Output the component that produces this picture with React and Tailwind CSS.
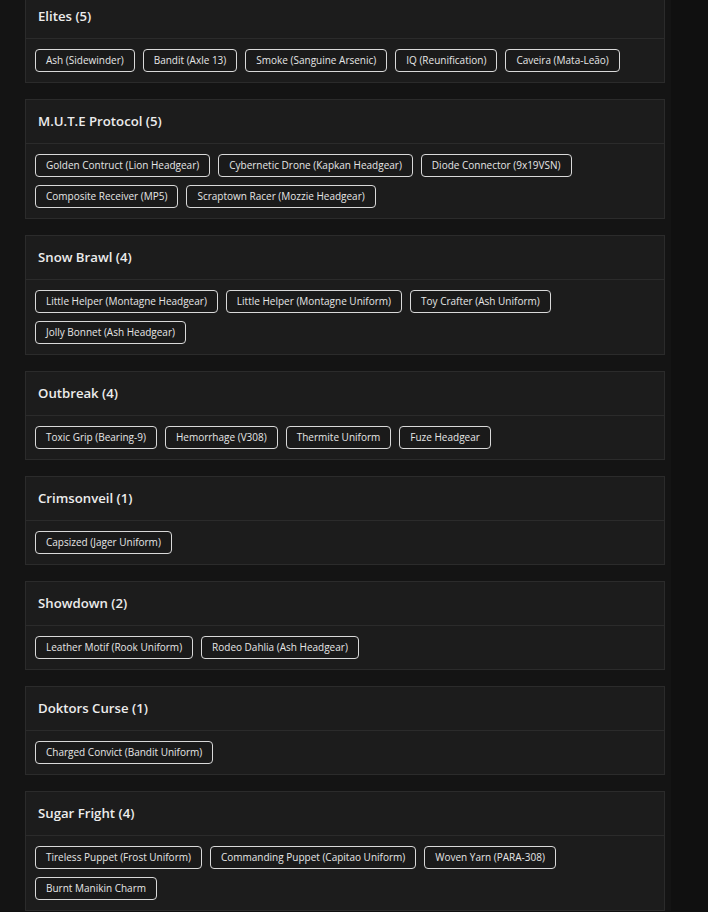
import React from 'react';

const sets = [
    { name: 'Elites', items: ['Ash (Sidewinder)', 'Bandit (Axle 13)', 'Smoke (Sanguine Arsenic)', 'IQ (Reunification)', 'Caveira (Mata-Leão)'] },
    { name: 'M.U.T.E Protocol', items: ['Golden Contruct (Lion Headgear)', 'Cybernetic Drone (Kapkan Headgear)', 'Diode Connector (9x19VSN)', 'Composite Receiver (MP5)', 'Scraptown Racer (Mozzie Headgear)'] },
    { name: 'Snow Brawl', items: ['Little Helper (Montagne Headgear)', 'Little Helper (Montagne Uniform)', 'Toy Crafter (Ash Uniform)', 'Jolly Bonnet (Ash Headgear)'] },
    { name: 'Outbreak', items: ['Toxic Grip (Bearing-9)', 'Hemorrhage (V308)', 'Thermite Uniform', 'Fuze Headgear'] },
    { name: 'Crimsonveil', items: ['Capsized (Jager Uniform)'] },
    { name: 'Showdown', items: ['Leather Motif (Rook Uniform)', 'Rodeo Dahlia (Ash Headgear)'] },
    { name: 'Doktors Curse', items: ['Charged Convict (Bandit Uniform)'] },
    { name: 'Sugar Fright', items: ['Tireless Puppet (Frost Uniform)', 'Commanding Puppet (Capitao Uniform)', 'Woven Yarn (PARA-308)', 'Burnt Manikin Charm'] },
];

const SetCard = ({ set }) => (
    <div className="bg-[#1c1c1c] border border-[#2b2b2b] mb-[16px]">
        {/* titulo do set */}
        <div className="h-[44px] flex items-center px-3 border-b border-[#2b2b2b]">
            <h2 className="text-[13.2px] font-semibold text-[#ececec]">
                {set.name} ({set.items.length})
            </h2>
        </div>
        <div className="flex flex-wrap gap-2 px-[9px] py-[10px]">
            {set.items.map(item => (
                <span
                    key={item}
                    className="h-[23px] flex items-center px-[10px] text-[10px] text-[#e6e6e6] border border-[#d9d9d9] rounded-[4px] bg-[#1a1a1a] whitespace-nowrap"
                >
                    {item}
                </span>
            ))}
        </div>
    </div>
);

const App = () => {
    return (
        <div className="min-h-screen bg-[#101010] overflow-hidden" style={{ fontFamily: '"Open Sans", "DejaVu Sans", sans-serif' }}>
            <div className="w-[671px] min-h-screen bg-[#141414] pl-[25px] pr-[6px] mt-[-6px]">
                {sets.map(set => (
                    <SetCard key={set.name} set={set} />
                ))}
            </div>
        </div>
    );
};

export default App;
